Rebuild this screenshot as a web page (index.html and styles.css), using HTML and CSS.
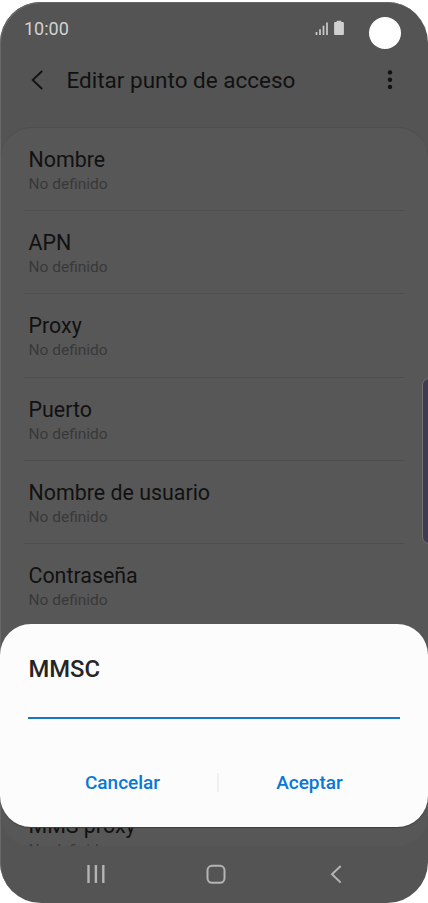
FILE: index.html
```html
<!DOCTYPE html>
<html lang="es">
  <head>
    <meta charset="UTF-8">
    <meta name="viewport" content="width=device-width,initial-scale=1.0">
    <title>Editar punto de acceso</title>
    <link rel="stylesheet" href="styles.css">
  </head>
  <body>
    <div class="phone">
      <div class="status_bar">
        <span class="clock">10:00</span>
        <svg class="status_icons" width="30" height="16" viewBox="0 0 30 16">
          <path d="M1.500 12v3M5 9.300V15M8.500 5.700V15M12 2.500V15" stroke="#cacaca" stroke-width="1.700"/>
          <path d="M21.700 .7h4.600v1.300h1.600q1 0 1 1V14q0 1-1 1h-7.800q-1 0-1-1V3q0-1 1-1h1.600z" fill="#d0d0d0"/>
        </svg>
        <div class="camera"></div>
      </div>
      <div class="header">
        <svg class="back" width="14" height="20" viewBox="0 0 14 20">
          <path d="M12.200 1L2.700 10l9.500 9" fill="none" stroke="#111" stroke-width="1.800"/>
        </svg>
        <h1>Editar punto de acceso</h1>
        <svg class="more" width="6" height="20" viewBox="0 0 6 20">
          <g fill="#111">
            <circle cx="3" cy="2.400" r="2.200"/>
            <circle cx="3" cy="9.700" r="2.200"/>
            <circle cx="3" cy="16.900" r="2.200"/>
          </g>
        </svg>
      </div>
      <div class="list">
        <div class="row"><p class="name">Nombre</p><p class="value">No definido</p></div>
        <div class="row"><p class="name">APN</p><p class="value">No definido</p></div>
        <div class="row"><p class="name">Proxy</p><p class="value">No definido</p></div>
        <div class="row"><p class="name">Puerto</p><p class="value">No definido</p></div>
        <div class="row"><p class="name">Nombre de usuario</p><p class="value">No definido</p></div>
        <div class="row"><p class="name">Contraseña</p><p class="value">No definido</p></div>
        <div class="row blank"></div>
        <div class="row blank"></div>
        <div class="row"><p class="name">MMS proxy</p><p class="value">No definido</p></div>
      </div>
      <div class="nav_bar">
        <svg width="20" height="20" viewBox="0 0 20 20">
          <path d="M2.500 1v18M9.900 1v18M17.300 1v18" stroke="#b4b4b4" stroke-width="2.400"/>
        </svg>
        <svg width="20" height="20" viewBox="0 0 20 20">
          <rect x="1.500" y="1.800" width="17" height="17" rx="4.500" fill="none" stroke="#b4b4b4" stroke-width="2"/>
        </svg>
        <svg width="20" height="20" viewBox="0 0 20 20">
          <path d="M14.700 2L6 10.300l8.700 8.300" fill="none" stroke="#b4b4b4" stroke-width="2"/>
        </svg>
      </div>
      <div class="edge_panel"></div>
      <div class="dialog">
        <h2>MMSC</h2>
        <div class="field"></div>
        <div class="buttons">
          <button type="button">Cancelar</button>
          <span class="separator"></span>
          <button type="button">Aceptar</button>
        </div>
      </div>
    </div>
  </body>
</html>
```
FILE: styles.css
```css
*{
  margin:0;
  padding:0;
  box-sizing:border-box;
}
body{
  background-color:#ffffff;
  font-family:Roboto, sans-serif;
  padding-top:2px;
  overflow:hidden;
}
.phone{
  position:relative;
  display:flex;
  flex-direction:column;
  width:428px;
  height:901px;
  padding-top:1px;
  background-color:#545454;
  border-radius:41px;
  box-shadow:inset 1px 1px 0 #686868;
  overflow:hidden;
}
.status_bar{
  display:flex;
  height:50px;
  padding-left:24px;
}
.clock{
  width:291px;
  padding-top:15px;
  font-size:18px;
  line-height:22px;
  color:#d2d2d2;
}
.status_icons{
  margin-top:17px;
}
.camera{
  width:32px;
  height:32px;
  margin:14px 0 0 23.5px;
  border-radius:50%;
  background-color:#ffffff;
}
.header{
  display:flex;
  align-items:center;
  height:54px;
  padding:0 35px 0 30px;
}
.header h1{
  flex:1;
  margin-left:22.5px;
  font-size:22.5px;
  font-weight:400;
  color:#111111;
}
.list{
  height:719px;
  margin:20px 0 0 1px;
  padding:0 23px 0 23px;
  background-color:#575757;
  border-top:1px solid #4e4e4e;
  border-radius:30px;
  overflow:hidden;
}
.row{
  height:83.2px;
  padding:19px 0 0 4.5px;
  border-bottom:1px solid #4f4f4f;
}
.name{
  font-size:21.4px;
  line-height:26px;
  color:#111111;
}
.value{
  font-size:15.5px;
  line-height:23px;
  color:#393939;
}
.nav_bar{
  display:flex;
  justify-content:space-between;
  padding:18px 82px 0 86px;
}
.edge_panel{
  position:absolute;
  right:-8px;
  top:376px;
  width:14px;
  height:166px;
  background-color:#403b51;
  border:1px solid #737373;
  border-radius:7px;
}
.dialog{
  position:absolute;
  left:0;
  top:622px;
  width:428px;
  height:203px;
  padding:29px 28px 0;
  background-color:#fcfcfc;
  border-radius:31px;
  box-shadow:0 1px 1px #404040;
}
.dialog h2{
  padding-left:.5px;
  font-size:23.8px;
  line-height:32px;
  font-weight:500;
  color:#252525;
}
.field{
  height:34px;
  border-bottom:2px solid #1777cf;
}
.buttons{
  display:grid;
  grid-template-columns:189px 2px 1fr;
  align-items:center;
  margin-top:45px;
}
.buttons button{
  height:36px;
  border:0;
  background:none;
  font-family:Roboto, sans-serif;
  font-size:19px;
  font-weight:500;
  color:#0878d8;
}
.separator{
  height:19px;
  background-color:#f0f0f0;
}
```
